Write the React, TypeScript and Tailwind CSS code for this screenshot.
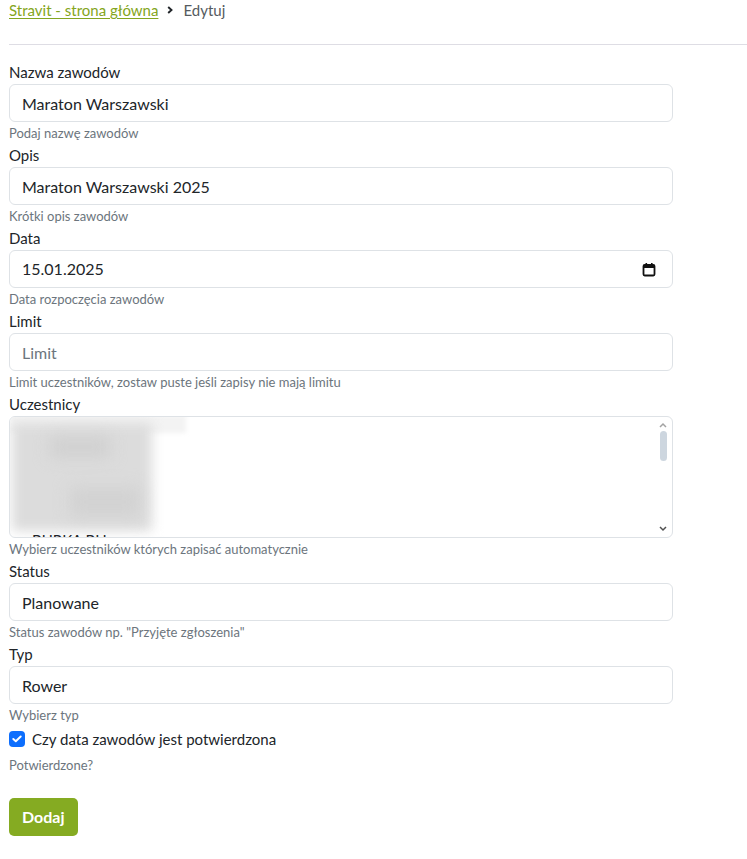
import { useState } from 'react';

const FONT = { fontFamily: 'Lato, "Open Sans", sans-serif' };

function Field({ label, help, children }: { label: string; help: string; children: React.ReactNode }) {
  return (
    <div>
      <label className="block h-6 leading-6 text-[15px] text-[#212529]">{label}</label>
      {children}
      <div className="h-[21px] leading-[22px] text-[13px] text-[#6c757d]">{help}</div>
    </div>
  );
}

function TextInput({ value, placeholder }: { value?: string; placeholder?: string }) {
  return (
    <input
      defaultValue={value}
      placeholder={placeholder}
      className="block w-full h-[38px] px-3 rounded-[6px] border border-[#dee2e6] bg-white text-[16px] text-[#212529] placeholder:text-[#6c757d] outline-none"
      style={FONT}
    />
  );
}

export default function App() {
  const [confirmed, setConfirmed] = useState(true);

  return (
    <div className="w-[747px] min-h-[859px] bg-white pl-[9px]" style={FONT}>
      <div className="h-5 flex items-center text-[15px]">
        <a href="#" className="text-[#84a520] underline underline-offset-2">Stravit - strona główna</a>
        <svg width="6" height="8" viewBox="0 0 6 8" className="ml-[9px]">
          <path d="M1.2 1 L4.5 4 L1.2 7" fill="none" stroke="#212529" strokeWidth="1.9" />
        </svg>
        <span className="ml-[10px] text-[#555b61]">Edytuj</span>
      </div>

      <div className="mt-[24px] mb-[15px] h-px bg-[#dedde4]" />

      <div className="w-[664px]">
        <Field label="Nazwa zawodów" help="Podaj nazwę zawodów">
          <TextInput value="Maraton Warszawski" />
        </Field>
        <Field label="Opis" help="Krótki opis zawodów">
          <TextInput value="Maraton Warszawski 2025" />
        </Field>
        <Field label="Data" help="Data rozpoczęcia zawodów">
          <div className="flex items-center h-[38px] px-3 rounded-[6px] border border-[#dee2e6] text-[16px] text-[#212529]">
            <span className="flex-1">15.01.2025</span>
            <svg width="14" height="15" viewBox="0 0 14 15" className="mr-[4px]">
              <rect x="1.5" y="3" width="11" height="10.5" rx="1.2" fill="none" stroke="#111" strokeWidth="1.8" />
              <rect x="1.5" y="3" width="11" height="3" fill="#111" />
              <rect x="3.5" y="1" width="1.6" height="3" fill="#111" />
              <rect x="9" y="1" width="1.6" height="3" fill="#111" />
            </svg>
          </div>
        </Field>
        <Field label="Limit" help="Limit uczestników, zostaw puste jeśli zapisy nie mają limitu">
          <TextInput placeholder="Limit" />
        </Field>
        <Field label="Uczestnicy" help="Wybierz uczestników których zapisać automatycznie">
          <div className="relative h-[122px] rounded-[6px] border border-[#dee2e6] overflow-hidden">
            <div className="absolute left-0 top-[-2px] w-[176px] h-[18px] bg-[#f3f3f3] blur-[2px]" />
            <div className="absolute left-[2px] top-[6px] w-[140px] h-[108px] bg-[#dcdcdc] blur-[6px]" />
            <div className="absolute left-[40px] top-[20px] w-[60px] h-[20px] bg-[#d0d0d0] blur-[8px]" />
            <div className="absolute left-[60px] top-[70px] w-[70px] h-[30px] bg-[#d2d2d2] blur-[8px]" />
            <div className="absolute left-[22px] top-[116px] text-[15px] leading-none text-[#212529]">BURKA BH</div>
            <div className="absolute right-[4px] top-[2px] bottom-[2px] w-[10px] flex flex-col items-center">
              <svg width="8" height="6" viewBox="0 0 8 6" className="mt-[3px]">
                <path d="M1 5 L4 2 L7 5" fill="none" stroke="#a3a3a3" strokeWidth="1.5" />
              </svg>
              <div className="mt-[3px] w-[7px] h-[30px] rounded-full bg-[#cdd6df]" />
              <div className="flex-1" />
              <svg width="8" height="6" viewBox="0 0 8 6" className="mb-[3px]">
                <path d="M1 1 L4 4 L7 1" fill="none" stroke="#505050" strokeWidth="1.5" />
              </svg>
            </div>
          </div>
        </Field>
        <Field label="Status" help='Status zawodów np. "Przyjęte zgłoszenia"'>
          <TextInput value="Planowane" />
        </Field>
        <Field label="Typ" help="Wybierz typ">
          <TextInput value="Rower" />
        </Field>

        <label className="flex items-center gap-[7px] h-[24px] mt-[2px] text-[15px] text-[#212529] cursor-pointer">
          <span
            onClick={() => setConfirmed(!confirmed)}
            className={`w-4 h-4 rounded-[4px] flex items-center justify-center ${confirmed ? 'bg-[#0d6efd]' : 'border border-[#dee2e6] bg-white'}`}
          >
            {confirmed && (
              <svg width="10" height="8" viewBox="0 0 10 8">
                <path d="M1.3 4 L3.8 6.3 L8.7 1.5" fill="none" stroke="white" strokeWidth="1.9" strokeLinecap="round" strokeLinejoin="round" />
              </svg>
            )}
          </span>
          Czy data zawodów jest potwierdzona
        </label>
        <div className="mt-[4px] h-[20px] leading-[20px] text-[13px] text-[#6c757d]">Potwierdzone?</div>

        <button className="mt-[23px] h-[38px] px-[13px] rounded-[5px] bg-[#85ab22] text-white text-[16px] font-bold">
          Dodaj
        </button>
      </div>
    </div>
  );
}
